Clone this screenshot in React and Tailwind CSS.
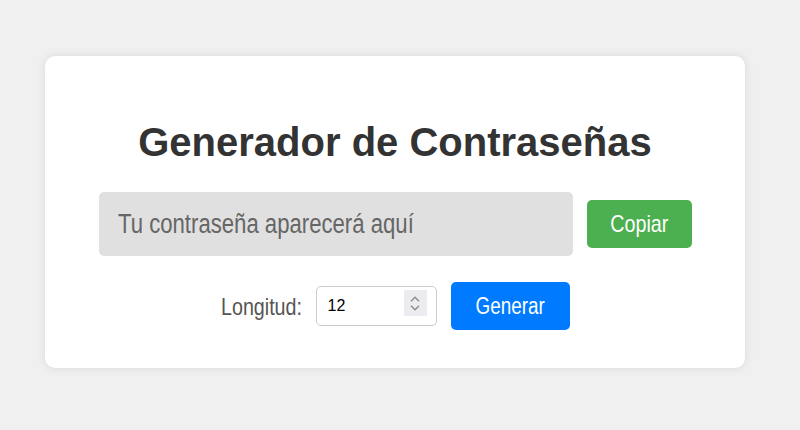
const narrow = "inline-block whitespace-nowrap font-['Liberation_Sans',Arial,sans-serif] scale-x-[0.82]";

export default function App() {
  return (
    <div className="flex h-[430px] w-[800px] items-start bg-[#f0f0f0] pl-[45px] pt-[56px]">
      <div className="flex h-[312px] w-[700px] flex-col items-center rounded-[10px] bg-white pt-[62px] shadow-[0_0_10px_rgba(0,0,0,0.1)]">
        <h1 className="font-['Liberation_Sans',Arial,sans-serif] text-[40px] font-bold leading-[48px] text-[#333]">
          Generador de Contraseñas
        </h1>
        <div className="mt-[26px] flex items-center gap-[14px]">
          <div className="flex h-[64px] w-[474px] items-center overflow-hidden rounded-[5px] bg-[#e0e0e0] px-[19px] text-[27px] text-[#666]">
            <span className={`${narrow} origin-left`}>Tu contraseña aparecerá aquí</span>
          </div>
          <button className="flex h-[48px] w-[105px] items-center justify-center rounded-[5px] bg-[#4caf50] text-[24px] text-white">
            <span className={narrow}>Copiar</span>
          </button>
        </div>
        <div className="mt-[26px] flex items-center">
          <label className="mr-[13px] w-[82px] text-[24px] text-[#555]">
            <span className={`${narrow} origin-left`}>Longitud:</span>
          </label>
          <div className="relative">
            <input
              type="number"
              defaultValue={12}
              className="h-[40px] w-[121px] rounded-[5px] border border-[#ccc] bg-white px-[11px] font-['Liberation_Sans',Arial,sans-serif] text-[16px] text-black [appearance:textfield] [&::-webkit-inner-spin-button]:appearance-none [&::-webkit-outer-spin-button]:appearance-none"
            />
            {/* spinner */}
            <div className="pointer-events-none absolute left-[88px] top-[4px] flex h-[26px] w-[23px] flex-col items-center justify-center gap-[3px] bg-[#ececf0]">
              <svg width="10" height="6" viewBox="0 0 10 6" fill="none" stroke="#8a8a8a" strokeWidth="1.3">
                <path d="M1 5.2 5 1.2 9 5.2" />
              </svg>
              <svg width="10" height="6" viewBox="0 0 10 6" fill="none" stroke="#8a8a8a" strokeWidth="1.3">
                <path d="M1 0.8 5 4.8 9 0.8" />
              </svg>
            </div>
          </div>
          <button className="ml-[14px] flex h-[48px] w-[119px] items-center justify-center rounded-[5px] bg-[#007bff] text-[23px] text-white">
            <span className={narrow}>Generar</span>
          </button>
        </div>
      </div>
    </div>
  );
}
